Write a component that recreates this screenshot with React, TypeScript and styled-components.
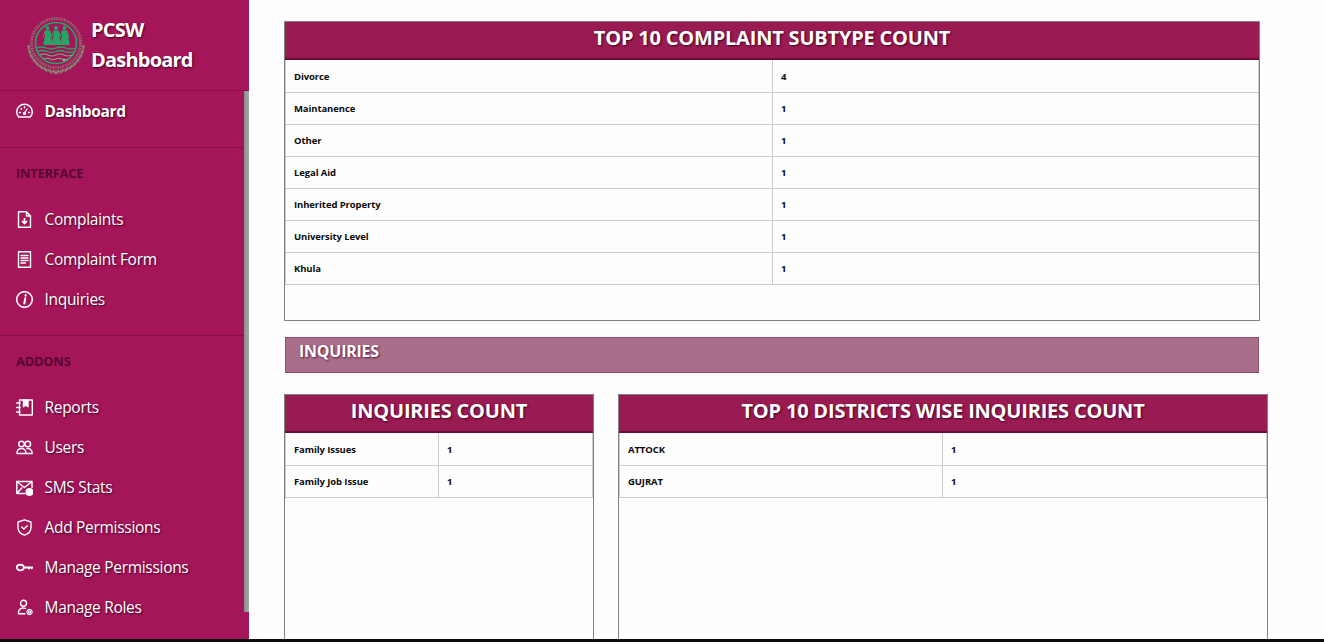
import React from 'react';
import styled, { createGlobalStyle } from 'styled-components';

const FONT = '"Open Sans", "Noto Sans", "Liberation Sans", sans-serif';

const GlobalStyle = createGlobalStyle`
  html, body { margin: 0; padding: 0; height: 100%; background: #fefefe; overflow: hidden; }
  #root { height: 100%; }
  * { box-sizing: border-box; }
`;

const Page = styled.div`
  width: 1324px;
  height: 642px;
  display: flex;
  flex-direction: column;
  font-family: ${FONT};
`;
const Body = styled.div`
  flex: 1;
  display: flex;
  min-height: 0;
`;
const BottomEdge = styled.div`
  height: 3px;
  background: #0c0c0c;
`;

// --- sidebar ---
const Sidebar = styled.aside`
  width: 249px;
  flex: none;
  background: #a5155a;
  display: flex;
  flex-direction: column;
`;
const Brand = styled.div`
  height: 91px;
  flex: none;
  padding: 15px 0 0 26px;
  display: flex;
  gap: 5px;
  border-bottom: 1px solid #85104a;
`;
const BrandTitle = styled.div`
  color: #fff;
  font-size: 20px;
  font-weight: 700;
  line-height: 30px;
  letter-spacing: -0.8px;
  text-shadow: 1px 1px 2px #3d0520;
`;
const NavArea = styled.div`
  flex: 1;
  display: flex;
  min-height: 0;
`;
const Nav = styled.nav`
  flex: 1;
`;
const ScrollTrack = styled.div`
  width: 5px;
  flex: none;
`;
const ScrollThumb = styled.div`
  height: 521px;
  background: linear-gradient(90deg, #8d8d8d, #a8a8a8);
`;
const NavItem = styled.div<{ $active?: boolean }>`
  height: 40px;
  display: flex;
  align-items: center;
  gap: 11.5px;
  padding-left: 16px;
  color: #fff;
  font-size: 15.5px;
  font-weight: ${({ $active }) => ($active ? 700 : 400)};
  letter-spacing: ${({ $active }) => ($active ? '-0.35px' : '-0.3px')};
  text-shadow: 1px 1px 2px #3d0520;
  svg { flex: none; width: 17px; height: 17px; fill: none; stroke: #fff; stroke-width: 1.4; stroke-linecap: round; stroke-linejoin: round; }
`;
const Divider = styled.div`
  height: 1px;
  background: #85104a;
  margin-top: 16px;
`;
const SectionLabel = styled.div`
  height: 51px;
  padding: 16px 0 0 16px;
  color: #570831;
  font-size: 13px;
  line-height: 18px;
  font-weight: 700;
  letter-spacing: -0.3px;
`;

// --- main area ---
const Main = styled.main`
  flex: 1;
  min-width: 0;
  overflow: hidden;
  padding: 21px 0 0 35px;
  display: flex;
  flex-direction: column;
`;
const Card = styled.section<{ $width: number }>`
  width: ${({ $width }) => $width}px;
  height: 300px;
  flex: none;
  border: 1px solid #808080;
`;
const CardHeader = styled.h2`
  margin: 0;
  height: 38px;
  background: #9a1a52;
  border-bottom: 2px solid #6c0a3a;
  color: #fff;
  font-size: 20px;
  font-weight: 700;
  line-height: 32px;
  text-align: center;
  letter-spacing: -0.2px;
  text-shadow: 1px 1px 2px #3d0520;
`;
const Table = styled.table`
  width: 100%;
  border-collapse: collapse;
  table-layout: fixed;
`;
const Cell = styled.td`
  height: 32px;
  padding: 1px 0 0 8px;
  border: 1px solid #cccccc;
  border-top: 0;
  color: #0a0a0a;
  font-size: 9.5px;
  font-weight: 700;
  letter-spacing: -0.1px;
  white-space: nowrap;
`;
const Banner = styled.div`
  width: 974px;
  height: 36px;
  flex: none;
  margin: 16px 0 21px 1px;
  padding-left: 13px;
  background: #a86e8a;
  border: 1px solid #90506f;
  color: #fff;
  font-size: 16px;
  font-weight: 700;
  line-height: 26px;
  letter-spacing: -0.25px;
  text-shadow: 1px 1px 2px #5c1a3a;
`;
const CardRow = styled.div`
  display: flex;
  gap: 24px;
`;

const Logo = () => {
  const wheat = Array.from({ length: 9 }, (_, i) => 5 + i * 10);
  return (
    <svg width="60" height="60" viewBox="0 0 60 60" style={{ flex: 'none', overflow: 'visible' }}>
      <circle cx="30" cy="28" r="24.500" fill="none" stroke="#8a8a7a" strokeWidth="3" strokeDasharray="1.5 1" opacity="0.7" />
      {wheat.map(a => {
        const rad = (a * Math.PI) / 180;
        const dx = 27.500 * Math.cos(rad);
        const y = 29 + 27 * Math.sin(rad);
        return (
          <g key={a} stroke="#86806f" strokeWidth="2.600" strokeLinecap="round">
            <line x1={30 + dx} y1={y} x2={30 + dx - 2.500 * Math.sin(rad)} y2={y + 2} />
            <line x1={30 - dx} y1={y} x2={30 - dx + 2.500 * Math.sin(rad)} y2={y + 2} />
          </g>
        );
      })}
      <circle cx="30" cy="28" r="20.500" fill="#a5155a" stroke="#26a563" strokeWidth="1.700" />
      <path d="M11 33q4.500-2 9.500 0t9.500 0 9.500 0 9.500 0M12 36.500q4.500-2 9 0t9 0 9 0 9 0" fill="none" stroke="#27a564" strokeWidth="1.300" />
      <path d="M14 40q4-2 8 0t8 0 8 0 8 0M18 44q3-1.500 6 0t6 0 6 0 6 0" fill="none" stroke="#86a884" strokeWidth="1.200" />
      {[21.500, 30, 38.500].map(x => (
        <g key={x} fill="#27a564">
          <circle cx={x} cy="13" r="2" />
          <path d={`M${x - 2.500} 15.500h5l1 5 1.800 9.500h-9.600l1.800-9.500z`} />
          <path d={`M${x - 2.500} 16l-2 6M${x + 2.500} 16l2 6`} stroke="#27a564" strokeWidth="0.900" fill="none" />
        </g>
      ))}
      <circle cx="38" cy="45" r="0.800" fill="#fff" />
    </svg>
  );
};

const GaugeIcon = () => (
  <svg viewBox="0 0 17 17">
    <path d="M2.700 14c-1.200-1.200-2-3-2-5a7.800 7.800 0 0 1 15.600 0c0 2-.8 3.800-2 5z" />
    <path d="M8.500 10l2.500-4M3.300 9.500h1.200M12.500 9.500h1.200M5 5.500l.8.8M8.500 3.700v1.100" />
    <circle cx="8.500" cy="10.500" r="1" />
  </svg>
);
const FileDownIcon = () => (
  <svg viewBox="0 0 17 17">
    <path d="M2.500.7h8L14.500 5v11.300h-12zM10.500.7V5h4" />
    <path d="M8.500 7.500v5M6.500 10.500l2 2.200 2-2.200" strokeWidth="1.700" />
  </svg>
);
const FormIcon = () => (
  <svg viewBox="0 0 17 17">
    <path d="M2.500.8h12v15.400h-12zM5 4.500h7M5 7h7M5 9.500h7M5 12h4.500" />
  </svg>
);
const InfoIcon = () => (
  <svg viewBox="0 0 17 17">
    <circle cx="8.500" cy="8.500" r="7.800" strokeWidth="1.500" />
    <path d="M9.300 7.300l-1 5.200M9.600 4v.8" strokeWidth="2" />
  </svg>
);
const NotebookIcon = () => (
  <svg viewBox="0 0 17 17">
    <path d="M3.500 1h12.800v15H3.500zM.7 4h3.500M.7 8.500h3.500M.7 13h3.500" />
    <path d="M7.500 1.200h4.500v6.500l-2.200-1.700-2.300 1.700z" fill="#fff" />
  </svg>
);
const UsersIcon = () => (
  <svg viewBox="0 0 17 17">
    <circle cx="5.500" cy="5" r="2.800" />
    <circle cx="11.800" cy="5" r="2.800" />
    <path d="M1 14.500c0-3.400 2-5 4.500-5s4.500 1.600 4.500 5zM11 9.500c2.800-.4 5.200 1.300 5.200 5h-6" />
  </svg>
);
const MailCheckIcon = () => (
  <svg viewBox="0 0 17 17">
    <path d="M16 8.500V2.500H.8v12h8.200M.8 2.500l7.600 6 7.600-6M.8 14.500l5-5.500" strokeWidth="1.500" />
    <circle cx="13.500" cy="13" r="3.300" fill="#fff" />
  </svg>
);
const ShieldIcon = () => (
  <svg viewBox="0 0 17 17">
    <path d="M8.500.8L15 3v5.500c0 3.700-2.800 6.400-6.500 7.700C4.800 14.900 2 12.200 2 8.500V3zM5.800 8l2 2 3.500-3.200" />
  </svg>
);
const KeyIcon = () => (
  <svg viewBox="0 0 17 17">
    <ellipse cx="4.300" cy="8.500" rx="3.500" ry="2.800" strokeWidth="1.800" />
    <path d="M7.800 8.500h8.600M13 8.500v1.200M15.800 8.500v.8" strokeWidth="1.800" />
  </svg>
);
const RolesIcon = () => (
  <svg viewBox="0 0 17 17">
    <circle cx="7.500" cy="4.300" r="3" />
    <path d="M8.800 14.800H2.500v-1.300c0-3 2.500-4.500 5-4.500.7 0 1.400.1 2 .3" />
    <circle cx="13.500" cy="13" r="1.200" strokeWidth="1.300" />
    <circle cx="13.500" cy="13" r="2.600" strokeDasharray="1.200 .9" strokeWidth="1.100" />
  </svg>
);

const INTERFACE_ITEMS = [
  { label: 'Complaints', icon: <FileDownIcon /> },
  { label: 'Complaint Form', icon: <FormIcon /> },
  { label: 'Inquiries', icon: <InfoIcon /> },
];
const ADDON_ITEMS = [
  { label: 'Reports', icon: <NotebookIcon /> },
  { label: 'Users', icon: <UsersIcon /> },
  { label: 'SMS Stats', icon: <MailCheckIcon /> },
  { label: 'Add Permissions', icon: <ShieldIcon /> },
  { label: 'Manage Permissions', icon: <KeyIcon /> },
  { label: 'Manage Roles', icon: <RolesIcon /> },
];

const SUBTYPES = [
  ['Divorce', '4'],
  ['Maintanence', '1'],
  ['Other', '1'],
  ['Legal Aid', '1'],
  ['Inherited Property', '1'],
  ['University Level', '1'],
  ['Khula', '1'],
];
const INQUIRIES = [['Family Issues', '1'], ['Family Job Issue', '1']];
const DISTRICTS = [['ATTOCK', '1'], ['GUJRAT', '1']];

const CountCard = ({ title, rows, width, firstCol }: { title: string; rows: string[][]; width: number; firstCol: number }) => (
  <Card $width={width}>
    <CardHeader>{title}</CardHeader>
    <Table>
      <colgroup>
        <col style={{ width: firstCol }} />
        <col />
      </colgroup>
      <tbody>
        {rows.map(([name, count]) => (
          <tr key={name}>
            <Cell>{name}</Cell>
            <Cell>{count}</Cell>
          </tr>
        ))}
      </tbody>
    </Table>
  </Card>
);

const App = () => (
  <Page>
    <GlobalStyle />
    <Body>
      <Sidebar>
        <Brand>
          <Logo />
          <BrandTitle>PCSW<br />Dashboard</BrandTitle>
        </Brand>
        <NavArea>
          <Nav>
            <NavItem $active><GaugeIcon />Dashboard</NavItem>
            <Divider />
            <SectionLabel>INTERFACE</SectionLabel>
            {INTERFACE_ITEMS.map(item => (
              <NavItem key={item.label}>{item.icon}{item.label}</NavItem>
            ))}
            <Divider />
            <SectionLabel>ADDONS</SectionLabel>
            {ADDON_ITEMS.map(item => (
              <NavItem key={item.label}>{item.icon}{item.label}</NavItem>
            ))}
          </Nav>
          <ScrollTrack><ScrollThumb /></ScrollTrack>
        </NavArea>
      </Sidebar>
      <Main>
        <CountCard title="TOP 10 COMPLAINT SUBTYPE COUNT" rows={SUBTYPES} width={976} firstCol={487} />
        <Banner>INQUIRIES</Banner>
        <CardRow>
          <CountCard title="INQUIRIES COUNT" rows={INQUIRIES} width={310} firstCol={153} />
          <CountCard title="TOP 10 DISTRICTS WISE INQUIRIES COUNT" rows={DISTRICTS} width={650} firstCol={323} />
        </CardRow>
      </Main>
    </Body>
    <BottomEdge />
  </Page>
);

export default App;
